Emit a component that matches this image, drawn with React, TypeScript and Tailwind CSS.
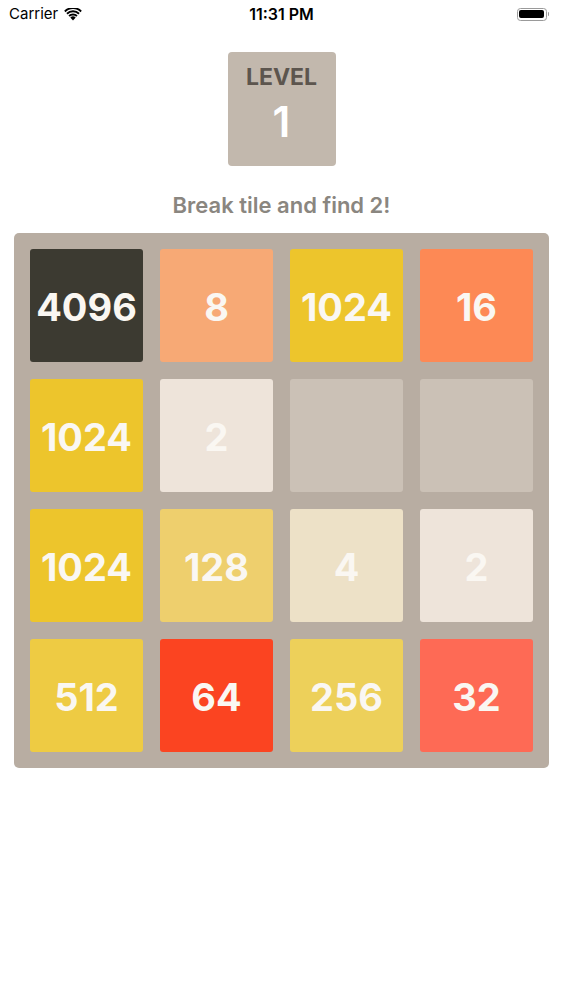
import React from 'react';

type Tile = { value: number | null; bg: string };

const tiles: Tile[] = [
  { value: 4096, bg: 'bg-[#3c3a31]' },
  { value: 8, bg: 'bg-[#f7a975]' },
  { value: 1024, bg: 'bg-[#edc52c]' },
  { value: 16, bg: 'bg-[#fd8955]' },
  { value: 1024, bg: 'bg-[#edc52c]' },
  { value: 2, bg: 'bg-[#eee4da]' },
  { value: null, bg: 'bg-[#cbc1b6]' },
  { value: null, bg: 'bg-[#cbc1b6]' },
  { value: 1024, bg: 'bg-[#edc52c]' },
  { value: 128, bg: 'bg-[#eecf6d]' },
  { value: 4, bg: 'bg-[#ede1c7]' },
  { value: 2, bg: 'bg-[#eee4da]' },
  { value: 512, bg: 'bg-[#eecb43]' },
  { value: 64, bg: 'bg-[#fb4421]' },
  { value: 256, bg: 'bg-[#edd05a]' },
  { value: 32, bg: 'bg-[#fe6a55]' },
];

function StatusBar() {
  return (
    <div className="relative flex h-[28px] items-center px-[9px] text-[15px] text-black">
      <div className="flex items-center gap-[6px]">
        <span>Carrier</span>
        <svg width="18" height="13" viewBox="0 0 18 13">
          <path d="M9 12.5 L6.3 9.4 A4 4 0 0 1 11.7 9.4 Z" fill="#000" />
          <path d="M4.4 7.3 A6.6 6.6 0 0 1 13.6 7.3 L12.3 8.8 A4.7 4.7 0 0 0 5.7 8.8 Z" fill="#000" />
          <path d="M2.3 5 A9.6 9.6 0 0 1 15.7 5 L14.4 6.5 A7.6 7.6 0 0 0 3.6 6.5 Z" fill="#000" />
          <path d="M0.2 2.7 A12.6 12.6 0 0 1 17.8 2.7 L16.5 4.2 A10.6 10.6 0 0 0 1.5 4.2 Z" fill="#000" />
        </svg>
      </div>
      <div className="absolute left-0 right-0 top-0 flex h-[28px] items-center justify-center text-[16px] font-semibold">
        11:31 PM
      </div>
      <div className="ml-auto flex items-center pr-[5px]">
        <div className="flex h-[13px] w-[30px] items-center rounded-[3.5px] border border-[#9a9a9a] p-[1.5px]">
          <div className="h-full w-full rounded-[2px] bg-black" />
        </div>
        <div className="ml-[1px] h-[4px] w-[1.5px] rounded-r bg-[#9a9a9a]" />
      </div>
    </div>
  );
}

export default function App() {
  return (
    <div className="h-[1000px] w-[563px] bg-white" style={{ fontFamily: 'Inter, "Liberation Sans", sans-serif' }}>
      <StatusBar />

      <div className="mx-auto mt-[24px] flex h-[114px] w-[108px] flex-col items-center rounded-[4px] bg-[#c2b8ad]">
        <div className="mt-[12px] text-[23px] font-bold leading-[26px] text-[#5c554e]">LEVEL</div>
        <div className="mt-[8px] text-[42px] font-semibold leading-[48px] text-white">1</div>
      </div>

      <div className="mt-[26px] text-center text-[22px] font-semibold leading-[26px] text-[#8a8680]">
        Break tile and find 2!
      </div>

      <div className="ml-[14px] mt-[15px] w-[535px] rounded-[5px] bg-[#b8ada2] p-[16px]">
        <div className="grid grid-cols-4 gap-[17px]">
          {tiles.map((t, i) => (
            <div
              key={i}
              className={`flex h-[113px] items-center justify-center rounded-[3px] pt-[4px] ${t.bg}`}
            >
              {t.value !== null && (
                <span className="text-[38px] font-bold text-[#faf7f2]">{t.value}</span>
              )}
            </div>
          ))}
        </div>
      </div>
    </div>
  );
}
